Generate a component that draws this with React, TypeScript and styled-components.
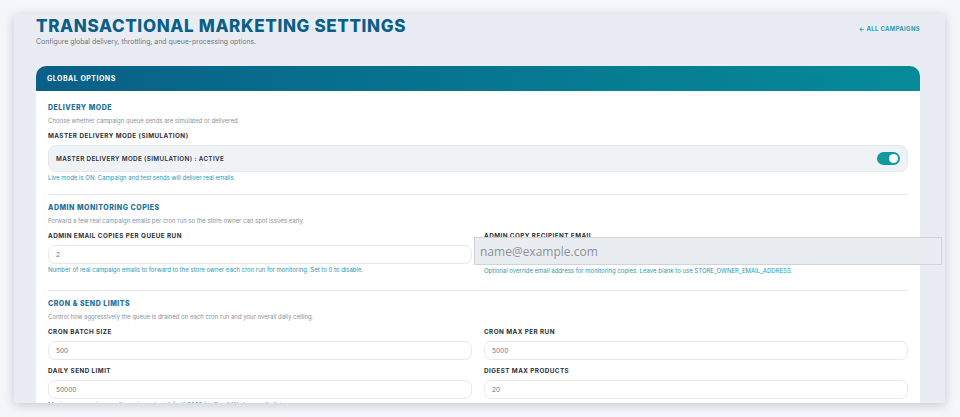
import styled, { createGlobalStyle } from 'styled-components';

const GlobalStyle = createGlobalStyle`
  * { box-sizing: border-box; }
  body {
    margin: 0;
    background: #f4f6fa;
    font-family: Inter, 'Noto Sans', sans-serif;
  }
`;

interface Field {
  label: string;
  value: string;
  help?: string;
}

const cronFields: Field[] = [
  { label: 'Cron batch size', value: '500' },
  { label: 'Cron max per run', value: '5000' },
  {
    label: 'Daily send limit',
    value: '50000',
    help: 'Maximum campaign emails sent per day (default 5000 for Gmail/Workspace limits).',
  },
  { label: 'Digest max products', value: '20' },
];

const App = () => {
  return (
    <Page>
      <GlobalStyle />
      <Frame>
        <TopBar>
          <div>
            <Title>Transactional Marketing Settings</Title>
            <Subtitle>Configure global delivery, throttling, and queue-processing options.</Subtitle>
          </div>
          <BackLink href="#">← All Campaigns</BackLink>
        </TopBar>

        <Card>
          <CardHeader>Global Options</CardHeader>
          <CardBody>
            <Section>
              <SectionTitle>Delivery Mode</SectionTitle>
              <SectionText>Choose whether campaign queue sends are simulated or delivered.</SectionText>
              <Label>Master Delivery Mode (Simulation)</Label>
              <ToggleRow>
                <ToggleText>Master Delivery Mode (Simulation) : Active</ToggleText>
                <Toggle $on />
              </ToggleRow>
              <Help>Live mode is ON. Campaign and test sends will deliver real emails.</Help>
            </Section>

            <Section>
              <SectionTitle>Admin Monitoring Copies</SectionTitle>
              <SectionText>
                Forward a few real campaign emails per cron run so the store owner can spot issues early.
              </SectionText>
              <Grid>
                <Cell>
                  <Label>Admin Email Copies Per Queue Run</Label>
                  <Input defaultValue="2" />
                  <Help>
                    Number of real campaign emails to forward to the store owner each cron run for monitoring. Set to 0 to disable.
                  </Help>
                </Cell>
                <Cell>
                  <Label>Admin Copy Recipient Email</Label>
                  <RawInput placeholder="name@example.com" />
                  <Help>
                    Optional override email address for monitoring copies. Leave blank to use STORE_OWNER_EMAIL_ADDRESS.
                  </Help>
                </Cell>
              </Grid>
            </Section>

            <Section>
              <SectionTitle>Cron &amp; Send Limits</SectionTitle>
              <SectionText>
                Control how aggressively the queue is drained on each cron run and your overall daily ceiling.
              </SectionText>
              <Grid>
                {cronFields.map((f) => (
                  <Cell key={f.label}>
                    <Label>{f.label}</Label>
                    <Input defaultValue={f.value} />
                    {f.help && <Help>{f.help}</Help>}
                  </Cell>
                ))}
              </Grid>
            </Section>
          </CardBody>
        </Card>
      </Frame>
    </Page>
  );
};

export default App;

const Page = styled.div`
  width: 960px;
  height: 417px;
  padding: 14px 15px 14px 14px;
`;

const Frame = styled.div`
  width: 931px;
  height: 389px;
  background: #e9edf3;
  box-shadow: 0 2px 10px rgba(30, 40, 60, 0.22);
  padding: 0 25px 0 22px;
  overflow: hidden;
`;

const TopBar = styled.div`
  display: flex;
  justify-content: space-between;
  align-items: flex-start;
  height: 52px;
`;

const Title = styled.h1`
  margin: 0;
  padding-top: 2px;
  font-size: 17px;
  line-height: 20px;
  font-weight: 800;
  letter-spacing: 0.65px;
  text-transform: uppercase;
  color: #0b5f86;
`;

const Subtitle = styled.p`
  margin: 1px 0 0;
  font-size: 6.9px;
  line-height: 10px;
  color: #6f7782;
`;

const BackLink = styled.a`
  margin-top: 11px;
  font-size: 6px;
  font-weight: 700;
  letter-spacing: 0.3px;
  text-transform: uppercase;
  color: #2a9db3;
  text-decoration: none;
`;

const Card = styled.div`
  background: #fff;
  border-radius: 10px 10px 0 0;
`;

const CardHeader = styled.div`
  height: 25px;
  display: flex;
  align-items: center;
  padding: 0 11px;
  border-radius: 10px 10px 0 0;
  background: linear-gradient(90deg, #0a5f88 0%, #067891 55%, #078a98 100%);
  color: #fff;
  font-size: 7px;
  font-weight: 700;
  letter-spacing: 0.5px;
  text-transform: uppercase;
`;

const CardBody = styled.div`
  padding: 12px 12px 20px;
`;

const Section = styled.div`
  padding-bottom: 12px;
  margin-bottom: 8px;
  border-bottom: 1px solid #e6e9ee;

  &:last-child {
    border-bottom: none;
  }
`;

const SectionTitle = styled.h2`
  margin: 0;
  font-size: 7px;
  line-height: 10px;
  font-weight: 800;
  letter-spacing: 0.5px;
  text-transform: uppercase;
  color: #1b6f9b;
`;

const SectionText = styled.p`
  margin: 3px 0 0;
  font-size: 6px;
  line-height: 9px;
  color: #8a919a;
`;

const Label = styled.div`
  margin: 7px 0 4px;
  font-size: 6.3px;
  line-height: 9px;
  font-weight: 700;
  letter-spacing: 0.45px;
  text-transform: uppercase;
  color: #2b2f36;
`;

const ToggleRow = styled.div`
  height: 27px;
  display: flex;
  align-items: center;
  justify-content: space-between;
  padding: 0 7px;
  border: 1px solid #e4e8ed;
  border-radius: 8px;
  background: #f0f3f6;
`;

const ToggleText = styled.span`
  font-size: 6.3px;
  font-weight: 600;
  letter-spacing: 0.35px;
  text-transform: uppercase;
  color: #2b2f36;
`;

const Toggle = styled.span<{ $on?: boolean }>`
  position: relative;
  width: 23px;
  height: 13px;
  border-radius: 7px;
  background: ${(p) => (p.$on ? '#12989f' : '#c7ced6')};

  &::after {
    content: '';
    position: absolute;
    top: 2px;
    left: ${(p) => (p.$on ? '12px' : '2px')};
    width: 9px;
    height: 9px;
    border-radius: 50%;
    background: #fff;
  }
`;

const Help = styled.p`
  margin: 1px 0 0;
  font-size: 6px;
  line-height: 9px;
  color: #2a97ad;
`;

const Grid = styled.div`
  display: grid;
  grid-template-columns: 1fr 1fr;
  column-gap: 12px;
  padding-bottom: 3px;
`;

const Cell = styled.div`
  min-width: 0;
`;

const Input = styled.input`
  display: block;
  width: 100%;
  height: 19px;
  padding: 0 7px;
  border: 1px solid #e6e9ee;
  border-radius: 7px;
  background: #fff;
  font-family: Inter, sans-serif;
  font-size: 6.5px;
  color: #6f7680;
  outline: none;
`;

const RawInput = styled.input`
  display: block;
  position: relative;
  width: 468px;
  height: 28px;
  margin: -8px 0 0 -10px;
  padding: 0 5px;
  border: 1px solid #cfd4db;
  background: #e9ecf1;
  font-family: 'Open Sans', sans-serif;
  font-size: 12px;
  color: #333;
  outline: none;

  &::placeholder {
    color: #8c9199;
  }
`;
